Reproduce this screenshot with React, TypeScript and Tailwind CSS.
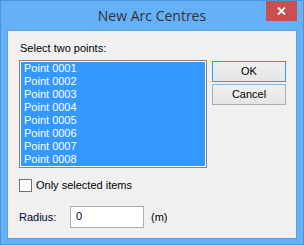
const points = [
  'Point 0001',
  'Point 0002',
  'Point 0003',
  'Point 0004',
  'Point 0005',
  'Point 0006',
  'Point 0007',
  'Point 0008',
];

export default function App() {
  return (
    <div className="w-[304px] h-[245px] flex flex-col bg-[#66b0f8] border border-[#4b95dc] font-['Liberation_Sans',Arial,sans-serif] text-[11px] text-black">
      {/* title bar */}
      <div className="h-[29px] grid grid-cols-[37px_1fr_37px]">
        <div />
        <div className="flex items-center justify-center text-[14px] text-[#333333] font-['Open_Sans',sans-serif]">
          New Arc Centres
        </div>
        <div className="flex justify-end pr-[6px]">
          <div className="w-[31px] h-[20px] bg-[#c75050] flex items-center justify-center">
            <svg width="9" height="8" viewBox="0 0 9 8">
              <path d="M1 0.5 L8 7.5 M8 0.5 L1 7.5" stroke="white" strokeWidth="1.8" />
            </svg>
          </div>
        </div>
      </div>

      {/* client area */}
      <div className="flex-1 mx-[6px] mb-[5px] border border-[#5a9fe0] bg-[#f0f0f0] flex flex-col">
        <div className="ml-[12px] mt-[10px] h-[14px] leading-[14px]">Select two points:</div>

        <div className="flex mt-[5px] ml-[11px]">
          <div className="w-[188px] h-[108px] border border-[#828282] bg-white p-[1px]">
            <div className="bg-[#3399ff] h-full">
              {points.map((p) => (
                <div key={p} className="h-[13px] leading-[13px] pl-[3px] text-white">
                  {p}
                </div>
              ))}
            </div>
          </div>
          <div className="ml-[5px] mt-[1px] flex flex-col gap-[2px]">
            <button className="w-[74px] h-[21px] border border-[#3399ff] bg-gradient-to-b from-[#f0f0f0] to-[#e5e5e5] flex items-center justify-center">
              OK
            </button>
            <button className="w-[74px] h-[21px] border border-[#acacac] bg-gradient-to-b from-[#f0f0f0] to-[#e5e5e5] flex items-center justify-center">
              Cancel
            </button>
          </div>
        </div>

        <div className="flex items-center ml-[11px] mt-[9px]">
          <div className="w-[13px] h-[13px] border border-[#707070] bg-white" />
          <span className="ml-[4px]">Only selected items</span>
        </div>

        <div className="flex items-start ml-[11px] mt-[12px]">
          <span className="w-[51px] pt-[3px] text-[#000033]">Radius:</span>
          <div className="w-[74px] h-[22px] border border-[#abadb3] bg-white flex items-center pl-[5px] text-[#000033]">
            0
          </div>
          <span className="ml-[7px] pt-[3px]">(m)</span>
        </div>
      </div>
    </div>
  );
}
